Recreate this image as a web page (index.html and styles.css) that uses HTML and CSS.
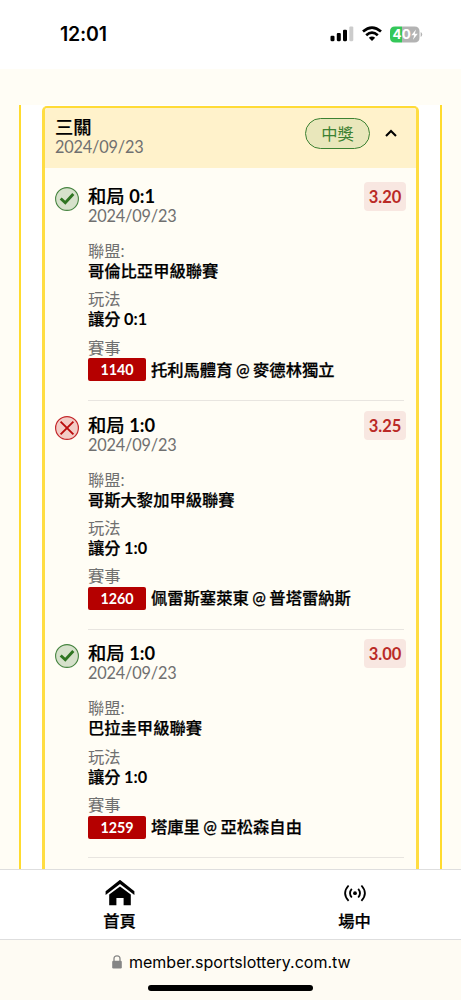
FILE: index.html
```html
<!DOCTYPE html>
<html lang="zh-Hant">
<head>
<meta charset="utf-8">
<meta name="viewport" content="width=device-width, initial-scale=1">
<title>投注紀錄</title>
<link rel="stylesheet" href="styles.css">
</head>
<body>
<svg class="defs" width="0" height="0" aria-hidden="true">
  <symbol id="won" viewBox="0 0 24 24">
    <circle cx="12" cy="12" r="11.4" fill="#d6e1cb" stroke="#468440" stroke-width="1.1"/>
    <path d="M5.7 11.5 10.3 15.8 18.3 7.1" fill="none" stroke="#2e7421" stroke-width="2.9"/>
  </symbol>
  <symbol id="lost" viewBox="0 0 24 24">
    <circle cx="12" cy="12" r="11.4" fill="#f3ccc6" stroke="#c3272b" stroke-width="1.2"/>
    <path d="M5.6 5.6 18.4 18.4M18.4 5.6 5.6 18.4" fill="none" stroke="#ba0c0c" stroke-width="1.9"/>
  </symbol>
</svg>
<header class="status">
  <span class="clock">12:01</span>
  <div class="indicators">
    <svg class="signal" width="24" height="16" viewBox="0 0 24 16">
      <rect x="0.5" y="9.8" width="4" height="5.4" rx="1.1"/>
      <rect x="6.8" y="7" width="4" height="8.2" rx="1.1"/>
      <rect x="13" y="3.8" width="4" height="11.4" rx="1.1"/>
      <rect x="19.3" y="0.5" width="4" height="14.7" rx="1.1" fill="#ccc"/>
    </svg>
    <svg class="wifi" width="20" height="16" viewBox="0 0 20 16">
      <g fill="none" stroke="#000" stroke-width="2.7">
        <path d="M1 5.6Q10-2.3 19 5.6"/>
        <path d="M4.2 9.2Q10 4.1 15.8 9.2"/>
      </g>
      <path d="M6.8 11.7Q10 9.2 13.2 11.7L10 15Z"/>
    </svg>
    <svg class="battery" width="33" height="17" viewBox="0 0 33 17">
      <path d="M5 .5H12V16.5H5Q0 16.5 0 11.5V5.5Q0 .5 5 .5Z" fill="#34c759"/>
      <path d="M12 .5H24.5Q29.5 .5 29.5 5.5V11.5Q29.5 16.5 24.5 16.5H12Z" fill="#b3b3b3"/>
      <path d="M30.7 6Q32.2 6.8 32.2 8.5T30.7 11Z" fill="#b3b3b3"/>
      <text x="2.6" y="13.3" class="charge">40</text>
      <path d="M26 3.6 21.3 9.3H24.2L23 13.8 27.8 7.8H24.8Z" fill="#fff"/>
    </svg>
  </div>
</header>
<main class="page">
  <div class="frame">
    <section class="ticket">
      <div class="summary">
        <div>
          <h1 class="title">三關</h1>
          <div class="date">2024/09/23</div>
        </div>
        <div class="result">
          <span class="pill">中獎</span>
          <svg width="12" height="8" viewBox="0 0 12 8"><path d="M1 7 6 2 11 7" fill="none" stroke="#000" stroke-width="2.1"/></svg>
        </div>
      </div>
      <div class="legs">
        <article class="leg">
          <svg class="mark"><use href="#won"/></svg>
          <div class="detail">
            <h2 class="title">和局 <b>0:1</b></h2>
            <div class="date">2024/09/23</div>
            <dl class="facts">
              <dt>聯盟:</dt><dd>哥倫比亞甲級聯賽</dd>
              <dt>玩法</dt><dd>讓分 <b>0:1</b></dd>
              <dt>賽事</dt><dd class="match"><span class="code">1140</span>托利馬體育 @ 麥德林獨立</dd>
            </dl>
          </div>
          <span class="odds">3.20</span>
        </article>
        <article class="leg">
          <svg class="mark"><use href="#lost"/></svg>
          <div class="detail">
            <h2 class="title">和局 <b>1:0</b></h2>
            <div class="date">2024/09/23</div>
            <dl class="facts">
              <dt>聯盟:</dt><dd>哥斯大黎加甲級聯賽</dd>
              <dt>玩法</dt><dd>讓分 <b>1:0</b></dd>
              <dt>賽事</dt><dd class="match"><span class="code">1260</span>佩雷斯塞萊東 @ 普塔雷納斯</dd>
            </dl>
          </div>
          <span class="odds">3.25</span>
        </article>
        <article class="leg">
          <svg class="mark"><use href="#won"/></svg>
          <div class="detail">
            <h2 class="title">和局 <b>1:0</b></h2>
            <div class="date">2024/09/23</div>
            <dl class="facts">
              <dt>聯盟:</dt><dd>巴拉圭甲級聯賽</dd>
              <dt>玩法</dt><dd>讓分 <b>1:0</b></dd>
              <dt>賽事</dt><dd class="match"><span class="code">1259</span>塔庫里 @ 亞松森自由</dd>
            </dl>
          </div>
          <span class="odds">3.00</span>
        </article>
      </div>
    </section>
  </div>
</main>
<nav class="tabs">
  <a class="tab">
    <svg width="30" height="28" viewBox="0 0 30 28"><path d="M.6 11.3 15-.2 29.4 11.3V15L15 4 .6 15Z"/><path d="M4.2 14.5 15 6.4 25.8 14.5V25.2H18.6V18H11.4V25.2H4.2Z"/></svg>
    <span>首頁</span>
  </a>
  <a class="tab">
    <svg width="24" height="28" viewBox="0 0 24 28"><circle cx="12" cy="13.2" r="1.9"/><g fill="none" stroke="#000" stroke-width="1.8"><path d="M8.8 8.9Q5.2 13.2 8.8 17.5M15.2 8.9Q18.8 13.2 15.2 17.5M5.6 5.5Q-1.4 13.2 5.6 20.9M18.4 5.5Q25.4 13.2 18.4 20.9"/></g></svg>
    <span>場中</span>
  </a>
</nav>
<footer class="browser">
  <div class="address">
    <svg width="10" height="14" viewBox="0 0 10 14"><rect x=".2" y="5.8" width="9.6" height="7.8" rx="1.3" fill="#858585"/><path d="M2 6.5V3.8Q2 .9 5 .9T8 3.8V6.5" fill="none" stroke="#858585" stroke-width="1.3"/></svg>
    <span>member.sportslottery.com.tw</span>
  </div>
  <div class="home-bar"></div>
</footer>
</body>
</html>
```

FILE: styles.css
```css
* { box-sizing: border-box; }
body {
  margin: 0;
  width: 461px;
  height: 1000px;
  overflow: hidden;
  display: flex;
  flex-direction: column;
  background: #fffdf5;
  color: #000;
  font-family: Lato, "Noto Sans CJK TC", sans-serif;
  font-size: 16.3px;
}
svg { display: block; flex: none; }
.defs { position: absolute; }
h1, h2, dl, dd { margin: 0; }
b { font-weight: 700; -webkit-text-stroke: 0; }

.status {
  flex: none;
  height: 69px;
  padding: 0 38px 0 60px;
  display: flex;
  justify-content: space-between;
  background: #fff;
}
.clock {
  padding-top: 22px;
  font: 600 19.5px/24px Inter, sans-serif;
  letter-spacing: -0.2px;
}
.indicators { display: flex; padding-top: 26px; }
.wifi { margin-left: 8px; }
.battery { margin-left: 8px; }
.charge { font: 700 13.5px Inter, sans-serif; fill: #fff; }

.page { flex: 1; min-height: 0; overflow: hidden; padding: 36px 19px 0; }
.frame {
  height: 900px;
  padding: 1px 21px 0;
  border: solid #ffdb2e;
  border-width: 0 2px;
  background: #fff;
}
.ticket {
  height: 900px;
  border: 3px solid #ffdd42;
  border-top: 2px solid #ffdb36;
  border-radius: 5px;
  background: #fffdf5;
  overflow: hidden;
}
.summary {
  height: 60px;
  padding: 9px 19px 0 10px;
  display: flex;
  justify-content: space-between;
  background: #fff2cb;
}
.title {
  font-size: 18.3px;
  line-height: 20px;
  font-weight: 500;
  white-space: nowrap;
  -webkit-text-stroke: 0.2px;
}
.date { font-size: 16.3px; line-height: 20px; letter-spacing: -0.17px; color: #707070; }
.result { display: flex; align-items: center; gap: 15px; height: 32px; }
.pill {
  width: 65px;
  height: 31px;
  border: 1.2px solid #3c8132;
  border-radius: 16px;
  background: #e9e7bb;
  color: #3c8132;
  line-height: 29px;
  text-align: center;
}
.legs { padding: 4.6px 10px 0; }
.leg { display: grid; grid-template-columns: 24px 1fr auto; column-gap: 9px; height: 228.6px; }
.mark { width: 24px; height: 24px; margin-top: 14.5px; }
.detail {
  grid-area: 1 / 2 / 2 / 4;
  margin-right: 2px;
  padding-top: 13.7px;
  border-bottom: 1.5px solid #e8e5e0;
}
.odds {
  grid-area: 1 / 3;
  width: 42px;
  height: 29px;
  margin-top: 9.5px;
  border-radius: 4px;
  background: #f8e7e1;
  color: #ba2a26;
  font-size: 16.5px;
  font-weight: 700;
  line-height: 31px;
  text-align: center;
}
.facts { padding-top: 14.8px; line-height: 20px; }
.facts dt { color: #707070; }
.facts dd {
  margin-bottom: 8.4px;
  font-weight: 500;
  white-space: nowrap;
  word-spacing: -0.6px;
  -webkit-text-stroke: 0.25px;
}
.match { display: flex; align-items: center; gap: 5px; height: 24px; }
.code {
  width: 58px;
  height: 23px;
  border-radius: 2px;
  background: #b50000;
  color: #fff;
  font-size: 14.3px;
  font-weight: 700;
  line-height: 23px;
  text-align: center;
  -webkit-text-stroke: 0;
}

.tabs {
  flex: none;
  height: 71px;
  display: flex;
  border: solid #dedede;
  border-width: 1px 0;
  background: #fff;
}
.tab {
  width: 235px;
  flex: none;
  padding-top: 10px;
  padding-left: 4px;
  display: flex;
  flex-direction: column;
  align-items: center;
  font-weight: 500;
  line-height: 26px;
  -webkit-text-stroke: 0.25px;
}
.browser { flex: none; height: 60px; background: #fefbf3; }
.address {
  display: flex;
  gap: 7px;
  padding: 12px 0 0 112px;
  height: 45px;
  font: 400 16px/20px Inter, sans-serif;
}
.address svg { margin-top: 3px; }
.home-bar { width: 165px; height: 6px; margin-left: 148px; border-radius: 3px; background: #000; }
```
